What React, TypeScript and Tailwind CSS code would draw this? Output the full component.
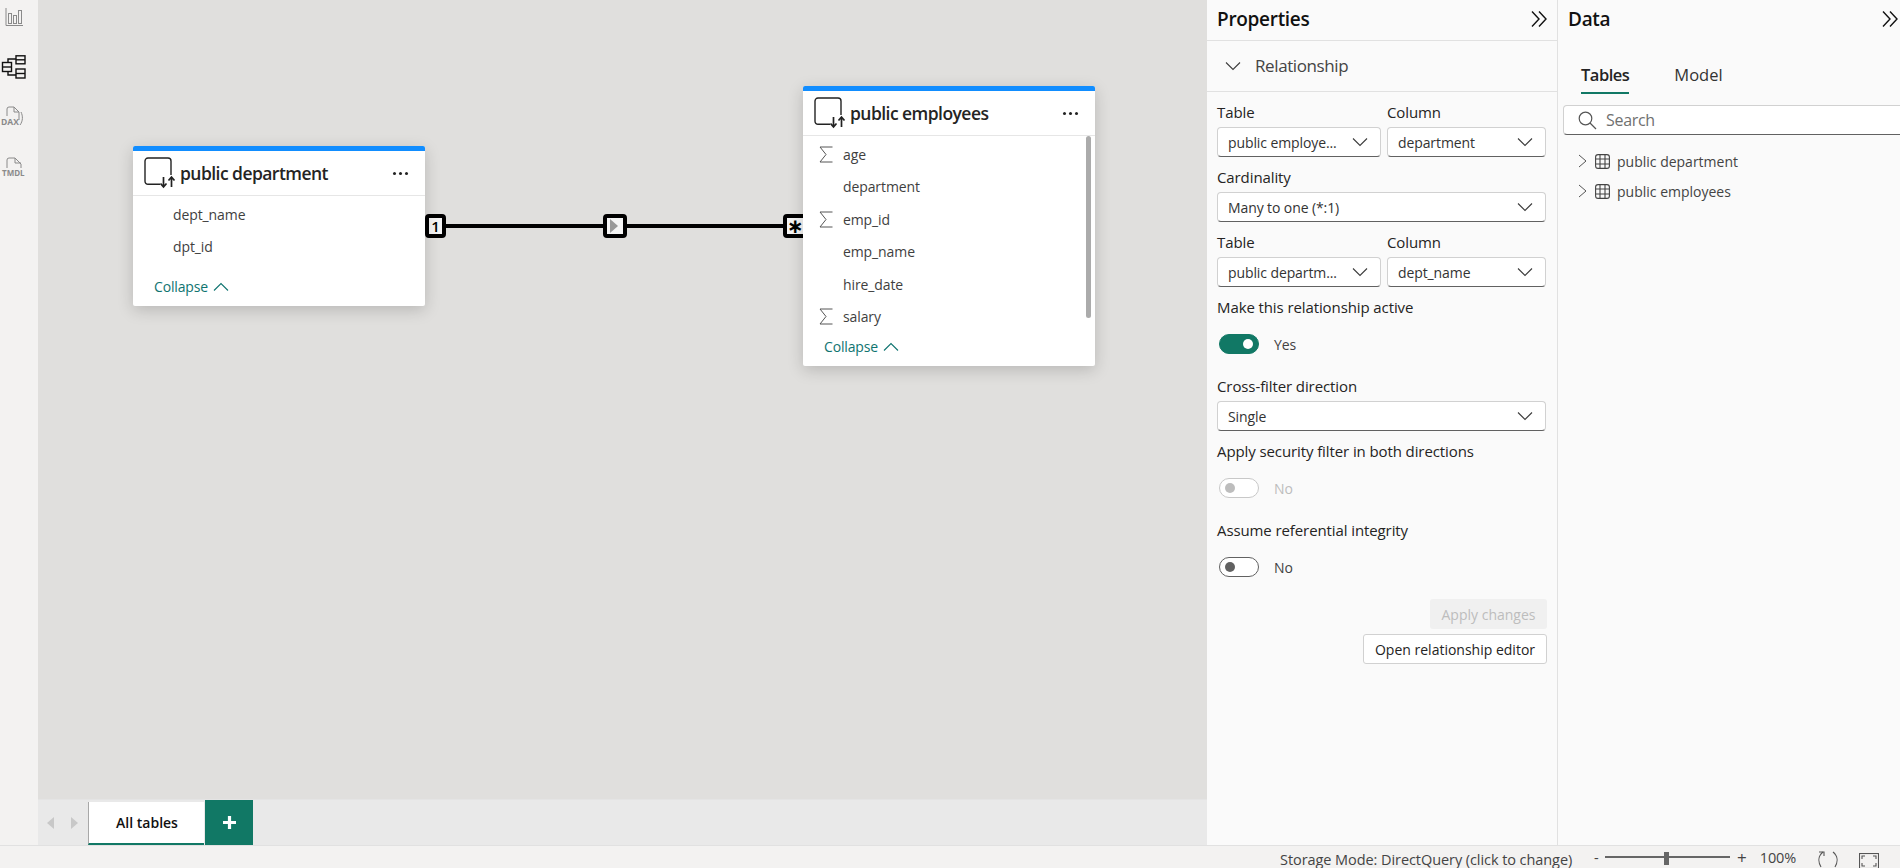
import React from "react";

const font = { fontFamily: '"Open Sans", "Noto Sans", "Liberation Sans", sans-serif' };

function Chev({ className = "" }: { className?: string }) {
  return (
    <svg width="16" height="10" viewBox="0 0 16 10" className={className} fill="none" stroke="#3d3d3d" strokeWidth="1.1">
      <path d="M1 1.5 L8 8.5 L15 1.5" />
    </svg>
  );
}

function DoubleChev() {
  return (
    <svg width="18" height="18" viewBox="0 0 18 18" fill="none" stroke="#111" strokeWidth="1.4">
      <path d="M2 1.5 L9 9 L2 16.5" />
      <path d="M9 1.5 L16 9 L9 16.5" />
    </svg>
  );
}

function Select({ text, className = "" }: { text: string; className?: string }) {
  return (
    <div className={`flex h-[30px] items-center justify-between rounded-[4px] border border-[#d1d1d1] border-b-[#616161] bg-white pl-[10px] pr-[12px] ${className}`}>
      <span className="text-[14px] tracking-[-0.1px] text-[#333]">{text}</span>
      <Chev />
    </div>
  );
}

function Label({ children, className = "" }: { children: React.ReactNode; className?: string }) {
  return <div className={`text-[15px] font-medium leading-[18px] tracking-[-0.1px] text-[#252423] ${className}`}>{children}</div>;
}

function Toggle({ state, text }: { state: "on" | "off" | "disabled"; text: string }) {
  const track =
    state === "on"
      ? "bg-[#117865] border-[#117865] justify-end"
      : state === "off"
      ? "bg-white border-[#616161] justify-start"
      : "bg-white border-[#c8c8c8] justify-start";
  const knob = state === "on" ? "bg-white" : state === "off" ? "bg-[#616161]" : "bg-[#bdbdbd]";
  return (
    <div className="flex h-[20px] items-center pl-[2px]">
      <div className={`flex h-[20px] w-[40px] items-center rounded-full border px-[5px] ${track}`}>
        <div className={`h-[10px] w-[10px] rounded-full ${knob}`} />
      </div>
      <span className={`ml-[15px] text-[14px] tracking-[-0.1px] ${state === "disabled" ? "text-[#bdbdbd]" : "text-[#424242]"}`}>{text}</span>
    </div>
  );
}

function TableIcon() {
  return (
    <svg width="34" height="32" viewBox="0 0 34 32" fill="none" stroke="#222" strokeWidth="1.4" className="shrink-0">
      <path d="M16 27.3 H4 a3 3 0 0 1 -3 -3 V4 a3 3 0 0 1 3 -3 H24 a3 3 0 0 1 3 3 V18" />
      <path d="M19.5 20 V30 M16.5 26.5 L19.5 30 L22.5 26.5" strokeWidth="1.7" />
      <path d="M27.5 30 V20 M24.5 23.5 L27.5 20 L30.5 23.5" strokeWidth="1.7" />
    </svg>
  );
}

function Sigma() {
  return (
    <svg width="14" height="17" viewBox="0 0 14 17" fill="none" stroke="#555" strokeWidth="1">
      <path d="M13.5 1 H1 L7 8.5 L1 16 H13.5" />
    </svg>
  );
}

function Dots() {
  return (
    <div className="flex gap-[3px]">
      <span className="h-[3px] w-[3px] rounded-full bg-[#222]" />
      <span className="h-[3px] w-[3px] rounded-full bg-[#222]" />
      <span className="h-[3px] w-[3px] rounded-full bg-[#222]" />
    </div>
  );
}

function Collapse() {
  return (
    <div className="flex items-center gap-[5px] text-[14px] tracking-[-0.15px] text-[#0f7470]">
      <span>Collapse</span>
      <svg width="16" height="10" viewBox="0 0 16 10" fill="none" stroke="#0f7470" strokeWidth="1.1">
        <path d="M1 8.5 L8 1.5 L15 8.5" />
      </svg>
    </div>
  );
}

function Card({
  title,
  rows,
  className,
  rowH,
  scroll,
  collapseClass,
}: {
  title: string;
  rows: { name: string; sum?: boolean }[];
  className: string;
  rowH: string;
  scroll?: boolean;
  collapseClass: string;
}) {
  return (
    <div className={`absolute w-[292px] overflow-hidden rounded-[2px] bg-white shadow-[0_4px_16px_rgba(0,0,0,0.18)] ${className}`}>
      <div className="h-[5px] bg-[#118dff]" />
      <div className="flex h-[45px] items-center border-b border-[#e6e6e6] pl-[11px] pr-[17px]">
        <TableIcon />
        <span className="ml-[2px] flex-1 text-[17.5px] font-semibold tracking-[-0.55px] text-[#252423]">{title}</span>
        <Dots />
      </div>
      <div className="relative">
        {scroll && <div className="absolute right-[4px] top-0 h-[182px] w-[5px] rounded-full bg-[#ababab]" />}
        <div className="pt-[2px]">
          {rows.map((r) => (
            <div key={r.name} className={`flex items-center ${rowH}`}>
              <div className="flex w-[40px] justify-end pr-[10px]">{r.sum ? <Sigma /> : null}</div>
              <span className="text-[14px] tracking-[-0.1px] text-[#3f3f3f]">{r.name}</span>
            </div>
          ))}
        </div>
        <div className={collapseClass}>
          <Collapse />
        </div>
      </div>
    </div>
  );
}

function Marker({ className, children }: { className: string; children: React.ReactNode }) {
  return (
    <div className={`absolute flex h-[24px] items-center justify-center rounded-[4px] border-[4px] border-black bg-[#f5f5f5] ${className}`}>
      {children}
    </div>
  );
}

function GridIcon() {
  return (
    <svg width="15" height="15" viewBox="0 0 15 15" fill="none" stroke="#444" strokeWidth="1.1">
      <rect x="0.6" y="0.6" width="13.8" height="13.8" rx="2.5" />
      <path d="M5 0.6 V14.4 M10 0.6 V14.4 M0.6 5 H14.4 M0.6 10 H14.4" />
    </svg>
  );
}

function TreeRow({ text }: { text: string }) {
  return (
    <div className="flex h-[30px] items-center pl-[20px]">
      <svg width="9" height="14" viewBox="0 0 9 14" fill="none" stroke="#555" strokeWidth="1">
        <path d="M1 1 L8 7 L1 13" />
      </svg>
      <span className="ml-[8px]">
        <GridIcon />
      </span>
      <span className="ml-[7px] text-[14px] tracking-[0px] text-[#444]">{text}</span>
    </div>
  );
}

function Rail() {
  return (
    <div className="w-[38px] shrink-0 bg-[#f3f2f1] pl-[1px] pt-[8px]">
      <svg width="26" height="20" viewBox="0 0 26 20" fill="none" stroke="#8a8a8a" strokeWidth="1" className="block">
        <path d="M5 0 V17.5 H22" />
        <rect x="7.5" y="5.5" width="3" height="10" />
        <rect x="12.5" y="7.5" width="3" height="8" />
        <rect x="17.5" y="2.5" width="3" height="13" />
      </svg>
      <svg width="26" height="24" viewBox="0 0 26 24" fill="none" stroke="#111" strokeWidth="1.4" className="mt-[27px] block">
        <rect x="1.5" y="7.5" width="9" height="9" />
        <path d="M1.5 12 H10.5" />
        <rect x="15" y="0.8" width="9" height="8" />
        <path d="M15 4.8 H24" />
        <rect x="15" y="14" width="9" height="9" />
        <path d="M15 18.5 H24" />
        <path d="M7 7.5 V4 H15 M7 16.5 V20 H15" />
      </svg>
      <svg width="26" height="22" viewBox="0 0 26 22" fill="none" stroke="#8a8a8a" strokeWidth="1" className="mt-[27px] block">
        <path d="M6 10 V3 a2 2 0 0 1 2 -2 H13 L18 6 V14" />
        <path d="M13 1 V6 H18" />
        <path d="M20 6 C22 10 22 15 19 19" />
        <text x="0" y="19" fontSize="8.5" fontWeight="700" fill="#8a8a8a" stroke="none" style={font}>DAX</text>
      </svg>
      <svg width="26" height="22" viewBox="0 0 26 22" fill="none" stroke="#8a8a8a" strokeWidth="1" className="mt-[29px] block">
        <path d="M6 11 V3 a2 2 0 0 1 2 -2 H14 L20 7 V11" />
        <path d="M14 1 V6 H20" />
        <text x="1" y="19" fontSize="8" fontWeight="700" fill="#8a8a8a" stroke="none" style={font}>TMDL</text>
      </svg>
    </div>
  );
}

function Canvas() {
  return (
    <div className="relative min-w-0 flex-1 bg-[#e0dfdd]">
      <div className="absolute left-[407px] top-[224px] h-[4px] w-[340px] bg-black" />
      <Marker className="left-[387px] top-[214px] w-[21px] text-[15px] font-semibold text-black">1</Marker>
      <Marker className="left-[565px] top-[214px] w-[24px]">
        <svg width="10" height="14" viewBox="0 0 10 14" className="-ml-[2px]">
          <path d="M1 0 L9 7 L1 14 Z" fill="#999" />
        </svg>
      </Marker>
      <Marker className="left-[745px] top-[214px] w-[24px] justify-start font-['DejaVu_Sans'] text-[20px] font-bold leading-[16px] text-black">
        <span>∗</span>
      </Marker>
      <Card
        title="public department"
        className="left-[95px] top-[146px] h-[160px]"
        rowH="h-[32px]"
        rows={[{ name: "dept_name" }, { name: "dpt_id" }]}
        collapseClass="absolute left-[21px] top-[80px]"
      />
      <Card
        title="public employees"
        scroll
        className="left-[765px] top-[86px] h-[280px]"
        rowH="h-[32.5px]"
        rows={[
          { name: "age", sum: true },
          { name: "department" },
          { name: "emp_id", sum: true },
          { name: "emp_name" },
          { name: "hire_date" },
          { name: "salary", sum: true },
        ]}
        collapseClass="absolute left-[21px] top-[200px]"
      />
      <div className="absolute bottom-0 left-0 right-0 flex h-[46px] border-t border-[#e4e4e4] bg-[#e9e9e9]">
        <div className="flex w-[50px] shrink-0 items-center justify-between pl-[8px] pr-[9px]">
          <svg width="8" height="12" viewBox="0 0 8 12"><path d="M8 0 V12 L1 6 Z" fill="#c8c8c8" /></svg>
          <svg width="8" height="12" viewBox="0 0 8 12"><path d="M0 0 V12 L7 6 Z" fill="#c8c8c8" /></svg>
        </div>
        <div className="mt-[2px] flex w-[116px] items-center justify-center border-b-[2px] border-l border-b-[#117865] border-l-[#a8a8a8] bg-white pl-[1px] text-[14px] font-semibold tracking-[0px] text-[#111]">
          All tables
        </div>
        <div className="ml-px flex w-[48px] items-center justify-center bg-[#117865]">
          <svg width="15" height="15" viewBox="0 0 15 15"><path d="M7.5 1 V14 M1 7.5 H14" stroke="#fff" strokeWidth="3.2" /></svg>
        </div>
      </div>
    </div>
  );
}

function Properties() {
  return (
    <div className="flex w-[351px] shrink-0 flex-col border-r border-[#e1e1e1] bg-[#fafafa]">
      <div className="flex h-[41px] shrink-0 items-center justify-between border-b border-[#e1e1e1] pb-[2px] pl-[10px] pr-[9px]">
        <span className="text-[19px] font-semibold tracking-[-0.3px] text-[#111]">Properties</span>
        <DoubleChev />
      </div>
      <div className="flex h-[51px] shrink-0 items-center border-b border-[#e1e1e1] pl-[18px]">
        <Chev />
        <span className="ml-[14px] text-[17px] tracking-[-0.4px] text-[#444]">Relationship</span>
      </div>
      <div className="flex flex-col px-[10px] pt-[11px]">
        <div className="flex gap-[6px]">
          <div className="w-[164px]">
            <Label className="mb-[6px]">Table</Label>
            <Select text="public employe..." />
          </div>
          <div className="w-[159px]">
            <Label className="mb-[6px]">Column</Label>
            <Select text="department" />
          </div>
        </div>
        <Label className="mb-[6px] mt-[11px]">Cardinality</Label>
        <Select text="Many to one (*:1)" className="w-[329px]" />
        <div className="mt-[11px] flex gap-[6px]">
          <div className="w-[164px]">
            <Label className="mb-[6px]">Table</Label>
            <Select text="public departm..." />
          </div>
          <div className="w-[159px]">
            <Label className="mb-[6px]">Column</Label>
            <Select text="dept_name" />
          </div>
        </div>
        <Label className="mb-[18px] mt-[11px]">Make this relationship active</Label>
        <Toggle state="on" text="Yes" />
        <Label className="mb-[6px] mt-[23px]">Cross-filter direction</Label>
        <Select text="Single" className="w-[329px]" />
        <Label className="mb-[18px] mt-[11px]">Apply security filter in both directions</Label>
        <Toggle state="disabled" text="No" />
        <Label className="mb-[18px] mt-[23px]">Assume referential integrity</Label>
        <Toggle state="off" text="No" />
        <div className="mt-[22px] flex w-[330px] flex-col items-end gap-[5px]">
          <div className="flex h-[30px] w-[117px] items-center justify-center rounded-[3px] bg-[#f0f0f0] text-[14px] text-[#bdbdbd]">
            Apply changes
          </div>
          <div className="flex h-[30px] w-[184px] items-center justify-center rounded-[3px] border border-[#d1d1d1] bg-white text-[14px] text-[#252423]">
            Open relationship editor
          </div>
        </div>
      </div>
    </div>
  );
}

function DataPane() {
  return (
    <div className="relative flex w-[342px] shrink-0 flex-col overflow-hidden bg-[#fafafa]">
      <div className="flex h-[40px] shrink-0 items-center justify-between pb-[2px] pl-[10px] pr-[1px]">
        <span className="text-[19px] font-semibold tracking-[-0.3px] text-[#111]">Data</span>
        <DoubleChev />
      </div>
      <div className="flex h-[55px] shrink-0 gap-[45px] pl-[23px] pt-[19px]">
        <div className="flex h-[35px] flex-col">
          <span className="text-[16.5px] font-semibold leading-[32px] tracking-[-0.5px] text-[#242424]">Tables</span>
          <span className="mt-auto h-[2px] bg-[#117865]" />
        </div>
        <span className="text-[16.5px] leading-[32px] tracking-[0px] text-[#333]">Model</span>
      </div>
      <div className="ml-[5px] mt-[10px] flex h-[30px] w-[360px] shrink-0 items-center rounded-[4px] border border-[#d1d1d1] border-b-[#616161] bg-white pl-[14px]">
        <svg width="19" height="19" viewBox="0 0 19 19" fill="none" stroke="#555" strokeWidth="1.2">
          <circle cx="7.5" cy="7.5" r="6.3" />
          <path d="M12 12 L18 18" />
        </svg>
        <span className="ml-[9px] text-[16px] tracking-[-0.3px] text-[#707070]">Search</span>
      </div>
      <div className="mt-[11px]">
        <TreeRow text="public department" />
        <TreeRow text="public employees" />
      </div>
    </div>
  );
}

function StatusBar() {
  return (
    <div className="flex h-[23px] shrink-0 items-start overflow-hidden border-t border-[#e1e1e1] bg-[#f3f2f1] pl-[1280px] text-[14.5px] tracking-[-0.07px] text-[#444]">
      <span className="mt-[6px] w-[291px] shrink-0 whitespace-nowrap leading-[16px]">Storage Mode: DirectQuery (click to change)</span>
      <span className="ml-[23px] mt-[3px] w-[8px] leading-[18px]">-</span>
      <div className="relative ml-[3px] mt-[10px] h-[2px] w-[125px] bg-[#666]">
        <div className="absolute left-[59px] top-[-4px] h-[13px] w-[5px] bg-[#666]" />
      </div>
      <span className="ml-[7px] mt-[3px] text-[17px] leading-[18px]">+</span>
      <span className="ml-[13px] mt-[3px] leading-[18px]">100%</span>
      <svg width="22" height="18" viewBox="0 0 22 18" fill="none" stroke="#555" strokeWidth="1.1" className="ml-[21px] mt-[4px]">
        <path d="M6 2 C1 6 1 12 4 17" />
        <path d="M16 2 C21 6 21 12 18 17" />
        <path d="M2 2 H7 V6" />
      </svg>
      <svg width="20" height="16" viewBox="0 0 20 16" fill="none" stroke="#555" strokeWidth="1.1" className="ml-[20px] mt-[7px]">
        <rect x="0.5" y="0.5" width="19" height="15" />
        <path d="M3 6 V3 H6 M14 3 H17 V6 M3 10 V13 H6 M14 13 H17 V10" />
      </svg>
    </div>
  );
}

export default function App() {
  return (
    <div className="flex h-screen w-full flex-col overflow-hidden" style={font}>
      <div className="flex min-h-0 flex-1">
        <Rail />
        <Canvas />
        <Properties />
        <DataPane />
      </div>
      <StatusBar />
    </div>
  );
}
